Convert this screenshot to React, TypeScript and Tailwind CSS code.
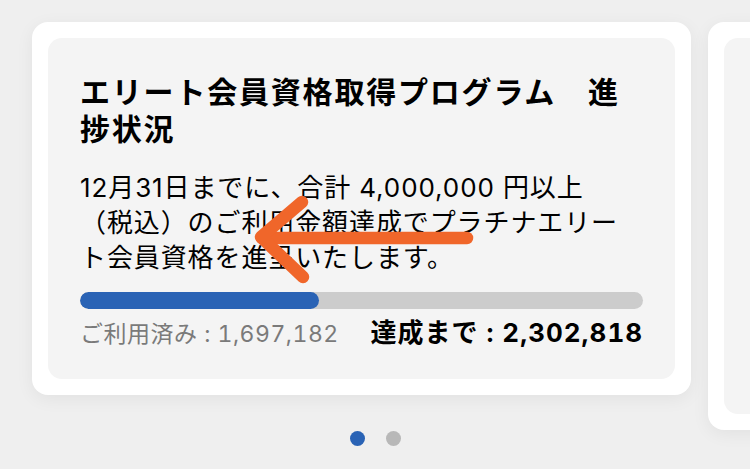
const FONT = { fontFamily: 'Inter, "Noto Sans CJK JP", "Noto Sans", sans-serif' };

function Arrow() {
  return (
    <svg
      className="pointer-events-none absolute left-0 top-0"
      width="627"
      height="341"
      viewBox="0 0 627 341"
      fill="none"
    >
      <g stroke="#f0662a" strokeWidth="12.5" strokeLinecap="round" strokeLinejoin="round">
        <path d="M419 200 L214 200" />
        <path d="M254 164 L213 199 L255 239" />
      </g>
    </svg>
  );
}

export default function App() {
  const used = 1697182;
  const goal = 4000000;
  const pct = (used / goal) * 100;

  return (
    <div className="h-[469px] w-[750px] overflow-hidden bg-[#efefef]" style={FONT}>
      <div className="flex gap-[17px] pl-[32px] pt-[22px]">
        <div className="h-[373px] w-[659px] shrink-0 rounded-[16px] bg-white p-4 shadow-[0_4px_18px_rgba(0,0,0,0.06)]">
          <div className="relative h-full rounded-[14px] bg-[#f4f4f4] px-8 pt-9">
            <h2 className="text-[30px] font-bold leading-[37px] tracking-[1.8px] text-black">
              エリート会員資格取得プログラム　進捗状況
            </h2>
            <p className="mt-[22px] max-w-[548px] text-[26px] leading-[35px] tracking-[0.9px] text-black">
              12月31日までに、合計 4,000,000 円以上（税込）のご利用金額達成でプラチナエリート会員資格を進呈いたします。
            </p>
            <div className="mt-[17px] h-[17px] w-full overflow-hidden rounded-full bg-[#cccccc]">
              <div className="h-full rounded-full bg-[#2a63b5]" style={{ width: `${pct}%` }} />
            </div>
            <div className="mt-1 flex items-baseline justify-between tabular-nums">
              <span className="text-[23px] tracking-[0.5px] text-[#7a7a7a]">ご利用済み : 1,697,182</span>
              <span className="text-[26px] font-bold tracking-[1px] text-black">達成まで : 2,302,818</span>
            </div>
            <Arrow />
          </div>
        </div>
        <div className="h-[408px] w-[300px] shrink-0 rounded-[16px] bg-white p-4 shadow-[0_4px_18px_rgba(0,0,0,0.06)]">
          <div className="h-full rounded-[14px] bg-[#f4f4f4]" />
        </div>
      </div>
      <div className="mt-[1px] flex justify-center gap-[21px]">
        <span className="h-[15px] w-[15px] rounded-full bg-[#2a63b5]" />
        <span className="h-[15px] w-[15px] rounded-full bg-[#b8b8b8]" />
      </div>
    </div>
  );
}
